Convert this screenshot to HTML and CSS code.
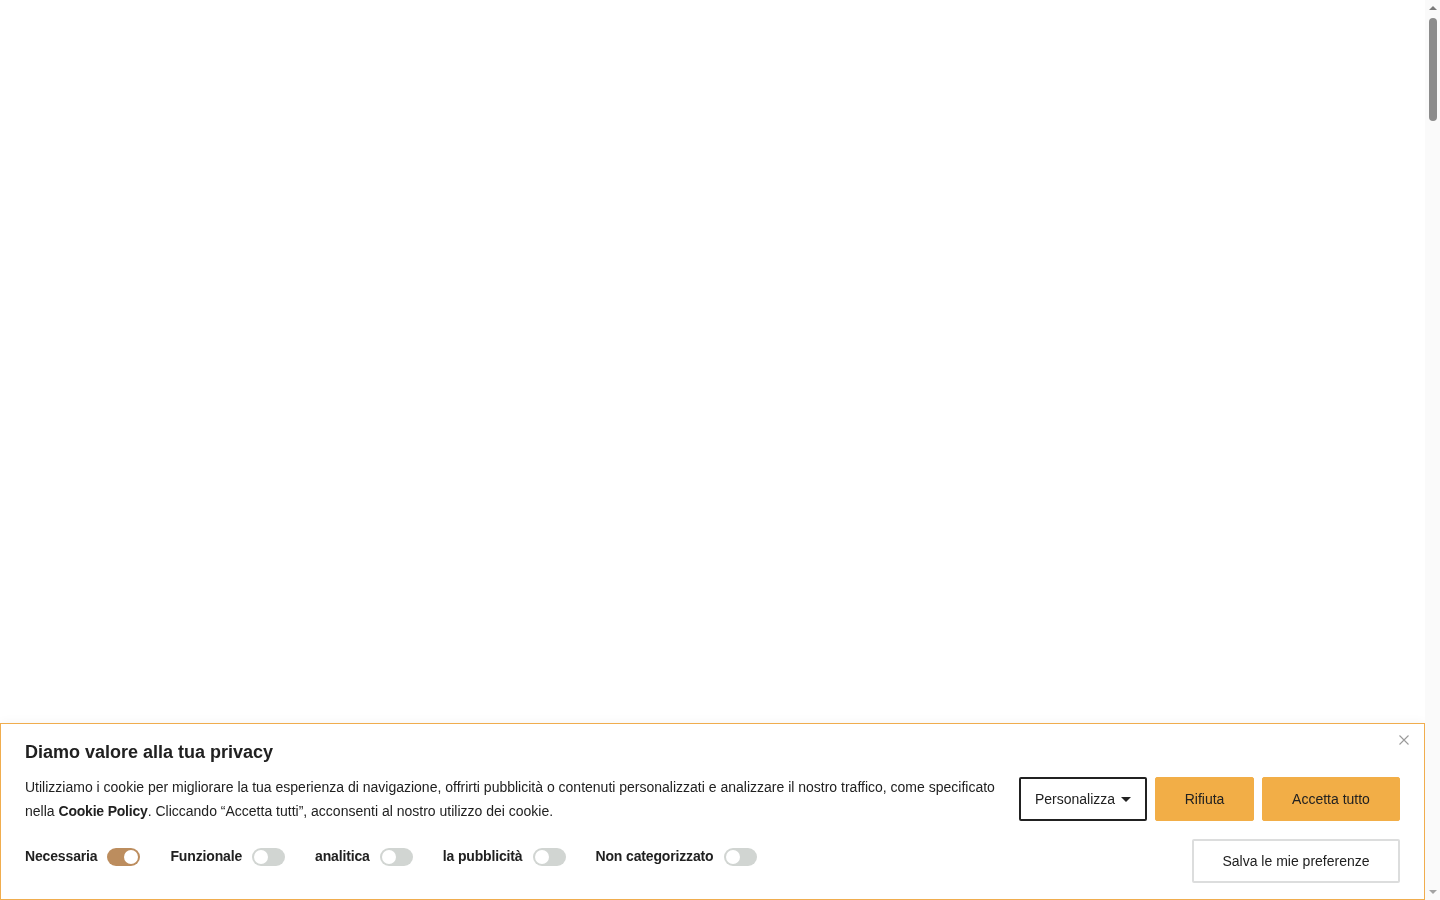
FILE: index.html
```html
<!DOCTYPE html>
<html lang="it">
<head>
<meta charset="utf-8">
<title>Privacy</title>
<link rel="stylesheet" href="styles.css">
</head>
<body>
<div class="page"></div>
<div class="cookie-banner">
  <button class="close-btn" aria-label="Chiudi">
    <svg width="10" height="10" viewBox="0 0 10 10"><path d="M0.5 0.5L9.5 9.5M9.5 0.5L0.5 9.5" stroke="#9a9a9a" stroke-width="1.1" fill="none"/></svg>
  </button>
  <h2 class="title">Diamo valore alla tua privacy</h2>
  <div class="row-main">
    <p class="desc">Utilizziamo i cookie per migliorare la tua esperienza di navigazione, offrirti pubblicità o contenuti personalizzati e analizzare il nostro traffico, come specificato nella <b>Cookie Policy</b>. Cliccando “Accetta tutti”, acconsenti al nostro utilizzo dei cookie.</p>
    <div class="actions">
      <button class="btn btn-outline">Personalizza <span class="caret"></span></button>
      <button class="btn btn-accent">Rifiuta</button>
      <button class="btn btn-accent btn-wide">Accetta tutto</button>
    </div>
  </div>
  <div class="row-prefs">
    <div class="toggles">
      <label class="toggle-item"><span class="toggle-label">Necessaria</span><span class="switch on"></span></label>
      <label class="toggle-item"><span class="toggle-label">Funzionale</span><span class="switch"></span></label>
      <label class="toggle-item"><span class="toggle-label">analitica</span><span class="switch"></span></label>
      <label class="toggle-item"><span class="toggle-label">la pubblicità</span><span class="switch"></span></label>
      <label class="toggle-item"><span class="toggle-label">Non categorizzato</span><span class="switch"></span></label>
    </div>
    <button class="btn btn-save">Salva le mie preferenze</button>
  </div>
</div>
<div class="scrollbar" aria-hidden="true">
  <span class="sb-arrow sb-up"></span>
  <span class="sb-thumb"></span>
  <span class="sb-arrow sb-down"></span>
</div>
</body>
</html>
```

FILE: styles.css
```css
html, body {
  margin: 0;
  padding: 0;
  background: #ffffff;
  font-family: "Liberation Sans", Arial, sans-serif;
  color: #212121;
}

.page {
  height: 7580px;
}

.cookie-banner {
  position: fixed;
  left: 0;
  right: 15px;
  bottom: 0;
  box-sizing: border-box;
  background: #ffffff;
  border: 1px solid #f0ad4e;
  padding: 16px 24px 16px 24px;
  box-shadow: 0 -1px 10px rgba(0, 0, 0, 0.04);
}

.close-btn {
  position: absolute;
  top: 11px;
  right: 15px;
  background: none;
  border: 0;
  padding: 0;
  width: 10px;
  height: 10px;
  display: flex;
  cursor: pointer;
}

.title {
  margin: 0 0 11px 0;
  font-size: 18px;
  line-height: 24px;
  font-weight: 700;
  color: #212121;
}

.row-main {
  display: flex;
  align-items: center;
}

.desc {
  flex: 1;
  margin: 0;
  font-size: 14px;
  line-height: 24px;
  color: #212121;
}

.desc b {
  font-weight: 700;
  letter-spacing: -0.2px;
}

.actions {
  display: flex;
  gap: 8px;
  margin-left: 24px;
}

.btn {
  box-sizing: border-box;
  height: 44px;
  font-family: "Liberation Sans", Arial, sans-serif;
  font-size: 14px;
  color: #212121;
  border-radius: 2px;
  cursor: pointer;
  display: inline-flex;
  align-items: center;
  justify-content: center;
}

.btn-outline {
  width: 128px;
  background: #ffffff;
  border: 2px solid #212121;
  gap: 6px;
  padding: 0;
}

.caret {
  width: 0;
  height: 0;
  border-left: 5px solid transparent;
  border-right: 5px solid transparent;
  border-top: 5px solid #212121;
  margin-top: 1px;
}

.btn-accent {
  width: 99px;
  background: #f2ae47;
  border: 1px solid #f2ae47;
  padding: 0;
}

.btn-wide {
  width: 138px;
}

.row-prefs {
  display: flex;
  justify-content: space-between;
  align-items: flex-start;
  margin-top: 16px;
}

.toggles {
  display: flex;
  align-items: center;
  gap: 30px;
  margin-top: 5px;
  height: 24px;
}

.toggle-item {
  display: flex;
  align-items: center;
  gap: 10px;
}

.toggle-label {
  font-size: 14px;
  font-weight: 700;
  line-height: 24px;
  color: #212121;
  letter-spacing: -0.15px;
}

.switch {
  position: relative;
  width: 33px;
  height: 18px;
  border-radius: 9px;
  background: #d1d5d2;
  margin-top: 2px;
}

.switch::after {
  content: "";
  position: absolute;
  top: 2px;
  left: 2px;
  width: 14px;
  height: 14px;
  border-radius: 50%;
  background: #ffffff;
}

.switch.on {
  background: #bc8d5e;
}

.switch.on::after {
  left: 17px;
}

.btn-save {
  width: 208px;
  background: #ffffff;
  border: 2px solid #dcdddd;
  padding: 0;
}

.scrollbar {
  position: fixed;
  top: 0;
  right: 0;
  bottom: 0;
  width: 15px;
  background: #fafafa;
  display: flex;
  flex-direction: column;
  align-items: center;
}

.sb-arrow {
  width: 0;
  height: 0;
  border-left: 4px solid transparent;
  border-right: 4px solid transparent;
}

.sb-up {
  border-bottom: 4px solid #7a7a7a;
  margin-top: 6px;
}

.sb-down {
  border-top: 4px solid #a3a3a3;
  margin-top: auto;
  margin-bottom: 6px;
}

.sb-thumb {
  width: 8px;
  height: 103px;
  margin-top: 8px;
  border-radius: 4px;
  background: #8c8c8c;
}
```
